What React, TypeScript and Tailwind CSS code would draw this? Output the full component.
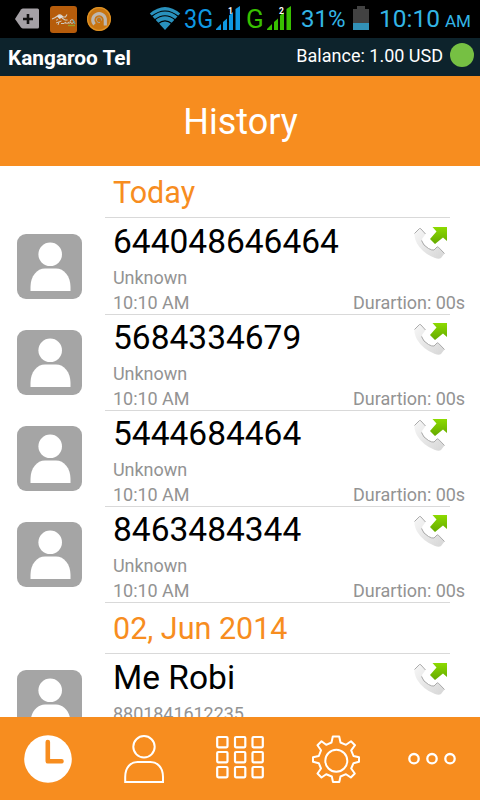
type Call = { name: string; detail: string; time?: string; duration?: string }

const CALLS: Call[] = [
    { name: '644048646464', detail: 'Unknown', time: '10:10 AM', duration: '00s' },
    { name: '5684334679', detail: 'Unknown', time: '10:10 AM', duration: '00s' },
    { name: '5444684464', detail: 'Unknown', time: '10:10 AM', duration: '00s' },
    { name: '8463484344', detail: 'Unknown', time: '10:10 AM', duration: '00s' },
]

const OLDER_CALLS: Call[] = [
    { name: 'Me Robi', detail: '8801841612235' },
]

function Signal({ color, sim }: { color: string; sim: string }) {
    return (
        <svg width="24" height="24" viewBox="0 0 24 24" className="shrink-0">
            <g fill={color}>
                <path d="M0 24V23L5 18V24z" />
                <path d="M7 24V16L11 12.500V24z" />
                <path d="M13 24V9.500L17 6V24z" />
                <path d="M19.500 24V3L24 0V24z" />
            </g>
            <text x="12" y="8" fill="#fff" fontSize="8.500" fontWeight="700" fontFamily="Roboto, sans-serif">{sim}</text>
        </svg>
    )
}

function StatusBar() {
    return (
        <div className="flex h-[38px] items-start bg-black text-[#33b5e5]">
            <svg width="184" height="38" viewBox="0 0 184 38" className="shrink-0">
                <path d="M15 19L21 9.500Q22 8.500 23 8.500H37.500Q39 8.500 39 10V27Q39 28.500 37.500 28.500H23Q22 28.500 21 27.500z" fill="#a5a1a6" />
                <path d="M28 14V24M23 19H33" stroke="#111" strokeWidth="2.600" />
                <rect x="50" y="6" width="27" height="27" rx="3" fill="#b65c0b" />
                <path d="M52 19Q55 18 57.500 16Q60 13 63 17L65.500 17L67 14.500M57.500 19L56.500 20.500M62 18L65 20H67.500" fill="none" stroke="#d5cfc6" strokeWidth="1.100" />
                <path d="M57 16.500Q60 13.500 63.500 17L59.500 19z" fill="#ddd" />
                <path d="M56 23L61.500 21M59 22L58 25M61 23.500H64M65 24V22L67 23.500L69 22V24" fill="none" stroke="#cfc8bd" strokeWidth="1" />
                <circle cx="72" cy="21.500" r="1.800" fill="none" stroke="#cfc8bd" />
                <path d="M68 25.500H75" stroke="#9aa025" strokeWidth="1.300" />
                <path d="M73 20L75 24" stroke="#68a0a0" strokeWidth="1.300" />
                <circle cx="99" cy="19" r="12" fill="#c87511" />
                <circle cx="99" cy="19" r="11.300" fill="none" stroke="#dc9225" strokeWidth="1.200" />
                <path d="M94.500 24.300A6.300 6.300 0 1 1 105.300 19V25.500" fill="none" stroke="#bdb7af" strokeWidth="3.200" />
                <path d="M101.500 20.500A2.600 2.600 0 1 0 97 21.500Q98 23 100 22.500" fill="none" stroke="#aaa49b" strokeWidth="1" />
                <path d="M149.800 13.500Q165 .5 180.200 13.500L165 30z" fill="#2991bd" />
                <g fill="none" stroke="#000" strokeWidth="1.200">
                    <path d="M151.500 16.500Q165 5.500 178.500 16.500" />
                    <path d="M154.500 20Q165 11.500 175.500 20" />
                    <path d="M158 23.800Q165 18 172 23.800" />
                </g>
            </svg>
            <div className="mt-[5px] h-7 w-8 shrink-0 origin-left scale-x-[.9] text-[26px] leading-7 text-[#0f98e2]">3G</div>
            <div className="mt-1.5 h-6"><Signal color="#0f98e2" sim="1" /></div>
            <div className="mt-[5px] ml-1.5 w-[21px] shrink-0 text-[26px] leading-7 text-[#38c000]">G</div>
            <div className="mt-1.5 h-6"><Signal color="#38c000" sim="2" /></div>
            <div className="mt-[5px] ml-[10px] w-[52px] shrink-0 text-[24px] leading-7">31%</div>
            <svg width="16" height="24" viewBox="0 0 16 24" className="mt-1.5 shrink-0">
                <path d="M0 3H4V0H12V3H16V24H0z" fill="#424242" />
                <path d="M0 17H16V24H0z" fill="#3291b7" />
            </svg>
            <div className="mt-[5px] ml-2.5 flex items-baseline whitespace-nowrap text-[24.500px] leading-7">
                <span className="w-[66px]">10:10</span>
                <span className="text-[17px]">AM</span>
            </div>
        </div>
    )
}

function Avatar() {
    return (
        <svg width="65" height="66" viewBox="0 0 65 66" className="shrink-0">
            <rect width="65" height="65" rx="9" fill="#a5a5a5" />
            <circle cx="33.200" cy="20.300" r="11.800" fill="#fff" />
            <path d="M13.500 57V53C13.500 42 20 34.500 28 34.500H39C47 34.500 53.500 42 53.500 53V57z" fill="#fff" />
        </svg>
    )
}

function OutgoingIcon() {
    return (
        <svg width="36" height="36" viewBox="0 -.5 36 36" className="shrink-0">
            <defs>
                <linearGradient id="handset" x1="0" y1="0" x2="1" y2="1">
                    <stop offset="0" stopColor="#f7f7f7" />
                    <stop offset="1" stopColor="#d6d6d6" />
                </linearGradient>
                <linearGradient id="arrow" x1="0" y1="0" x2="0" y2="1">
                    <stop offset="0" stopColor="#8ddb00" />
                    <stop offset="1" stopColor="#64a900" />
                </linearGradient>
            </defs>
            <path d="M1.500 8L6.500 3Q7 2.500 8 3.500L12.500 8.500L9 13.500Q10 19 15.500 23Q19 25 21 24.500L24 21.500Q24.500 21 25.500 21.800L31.500 28L28 32.500Q26 34 22 32.500Q10 28 4 18Q1 12 1.500 8z" fill="url(#handset)" />
            <path d="M1.500 8L6.500 3Q7 2.500 8 3.500L12.500 8.500M8.500 15Q10 20 15.500 23Q19 25 21 24.500L24 21.500Q24.500 21 25.500 21.800L31.500 28" fill="none" stroke="#aaa" strokeWidth="1" />
            <path d="M19.500 1.500H34V15.500L30 12L22 18.500L17 13.500L23.500 6z" fill="url(#arrow)" />
        </svg>
    )
}

function DayHeader({ label }: { label: string }) {
    return (
        <div className="mr-[30px] ml-[105px] h-[52px] border-b border-[#d9d9d9] pl-2 text-[30.500px] leading-[53px] text-[#f78d1f]">
            {label}
        </div>
    )
}

function CallRow({ call }: { call: Call }) {
    return (
        <div className="flex h-24 pt-4 pl-[17px]">
            <Avatar />
            <div className="-mt-4 ml-[31px] flex-1">
                <div className="flex h-[47px] items-start justify-between pr-[31px]">
                    <span className="text-[33.500px] leading-[47px] text-black">{call.name}</span>
                    <span className="mt-[7px]"><OutgoingIcon /></span>
                </div>
                <div className="text-[18px] leading-[25px] tracking-[-.05px] text-[#939393]">
                    <div>{call.detail}</div>
                    {call.time && (
                        <div className="flex justify-between pr-[15px]">
                            <span>{call.time}</span>
                            <span>Durartion: {call.duration}</span>
                        </div>
                    )}
                </div>
            </div>
        </div>
    )
}

function Divider() {
    return <div className="-mb-px ml-[105px] mr-[30px] h-px bg-[#d9d9d9]" />
}

function TabBar() {
    return (
        <nav className="grid h-[83px] shrink-0 grid-cols-5 bg-[#f78d1f]">
            <button className="flex justify-center pt-[18px]">
                <svg width="48" height="48" viewBox="0 0 48 48">
                    <circle cx="24" cy="24" r="23.800" fill="#fff" />
                    <path d="M23.800 7V26.200H37.500" fill="none" stroke="#f78d1f" strokeWidth="4.600" strokeLinecap="round" strokeLinejoin="round" />
                </svg>
            </button>
            <button className="flex justify-center pt-[18px]">
                <svg width="48" height="48" viewBox="0 0 48 48" fill="none" stroke="#fff" strokeWidth="2">
                    <circle cx="24" cy="11.800" r="10.700" />
                    <path d="M5.200 47V42C5.200 32 11 27 17.500 27H30.500C37 27 43 32 43 42V47z" />
                </svg>
            </button>
            <button className="flex justify-center pt-[18px]">
                <svg width="48" height="48" viewBox="0 0 48 48" fill="none" stroke="#fff" strokeWidth="2.200">
                    {[2, 17, 32].map(y => [1.2, 19, 36.5].map(x => (
                        <rect key={`${x}-${y}`} x={x} y={y} width="10.300" height="10.300" rx="1" />
                    )))}
                </svg>
            </button>
            <button className="flex justify-center pt-[18px]">
                <svg width="48" height="48" viewBox="0 0 48 48" fill="none" stroke="#fff" strokeWidth="2" strokeLinejoin="round">
                    <circle cx="24.300" cy="25.800" r="11" />
                    <path d="M20.800 1.500H27.200L28.500 7.500L34 9.800L39 6.200L43 10.200L39.200 15.300L41.500 21L47 22.200V26.800L41.500 28.200L39.200 33.500L42.800 38.500L38.800 42.500L34 39.200L28.500 41.500L27.300 47H21L19.800 41.500L14.200 39.200L9.500 42.500L5.500 38.500L9 33.500L6.800 28.200L1 26.800V22.200L6.800 21L9 15.300L5.500 10.200L9.500 6.200L14.200 9.800L19.500 7.500z" />
                </svg>
            </button>
            <button className="flex justify-center pt-[18px]">
                <svg width="48" height="48" viewBox="0 0 48 48" fill="none" stroke="#fff" strokeWidth="2.300">
                    <circle cx="6" cy="23.700" r="4.700" />
                    <circle cx="24" cy="23.700" r="4.700" />
                    <circle cx="42" cy="23.700" r="4.700" />
                </svg>
            </button>
        </nav>
    )
}

export default function App() {
    return (
        <div className="flex h-[800px] w-[480px] flex-col overflow-hidden bg-white font-[Roboto,sans-serif]">
            <StatusBar />
            <div className="flex h-[38px] shrink-0 items-start justify-between bg-[#0d232c] pr-1.5 pl-2 text-white">
                <span className="text-[20.800px] leading-10 font-bold">Kangaroo Tel</span>
                <div className="flex items-start gap-[7px]">
                    <span className="text-[18px] leading-9">Balance: 1.00 USD</span>
                    <span className="mt-[5px] size-6 rounded-full bg-[#76c043]" />
                </div>
            </div>
            <h1 className="h-[90px] shrink-0 bg-[#f78d1f] pl-px text-center text-[36px] leading-[93px] text-white">History</h1>
            <main className="min-h-0 flex-1 overflow-hidden">
                <DayHeader label="Today" />
                {CALLS.map((call, i) => (
                    <div key={call.name}>
                        {i > 0 && <Divider />}
                        <CallRow call={call} />
                    </div>
                ))}
                <Divider />
                <DayHeader label="02, Jun 2014" />
                {OLDER_CALLS.map(call => (
                    <CallRow key={call.name} call={call} />
                ))}
            </main>
            <TabBar />
        </div>
    )
}
